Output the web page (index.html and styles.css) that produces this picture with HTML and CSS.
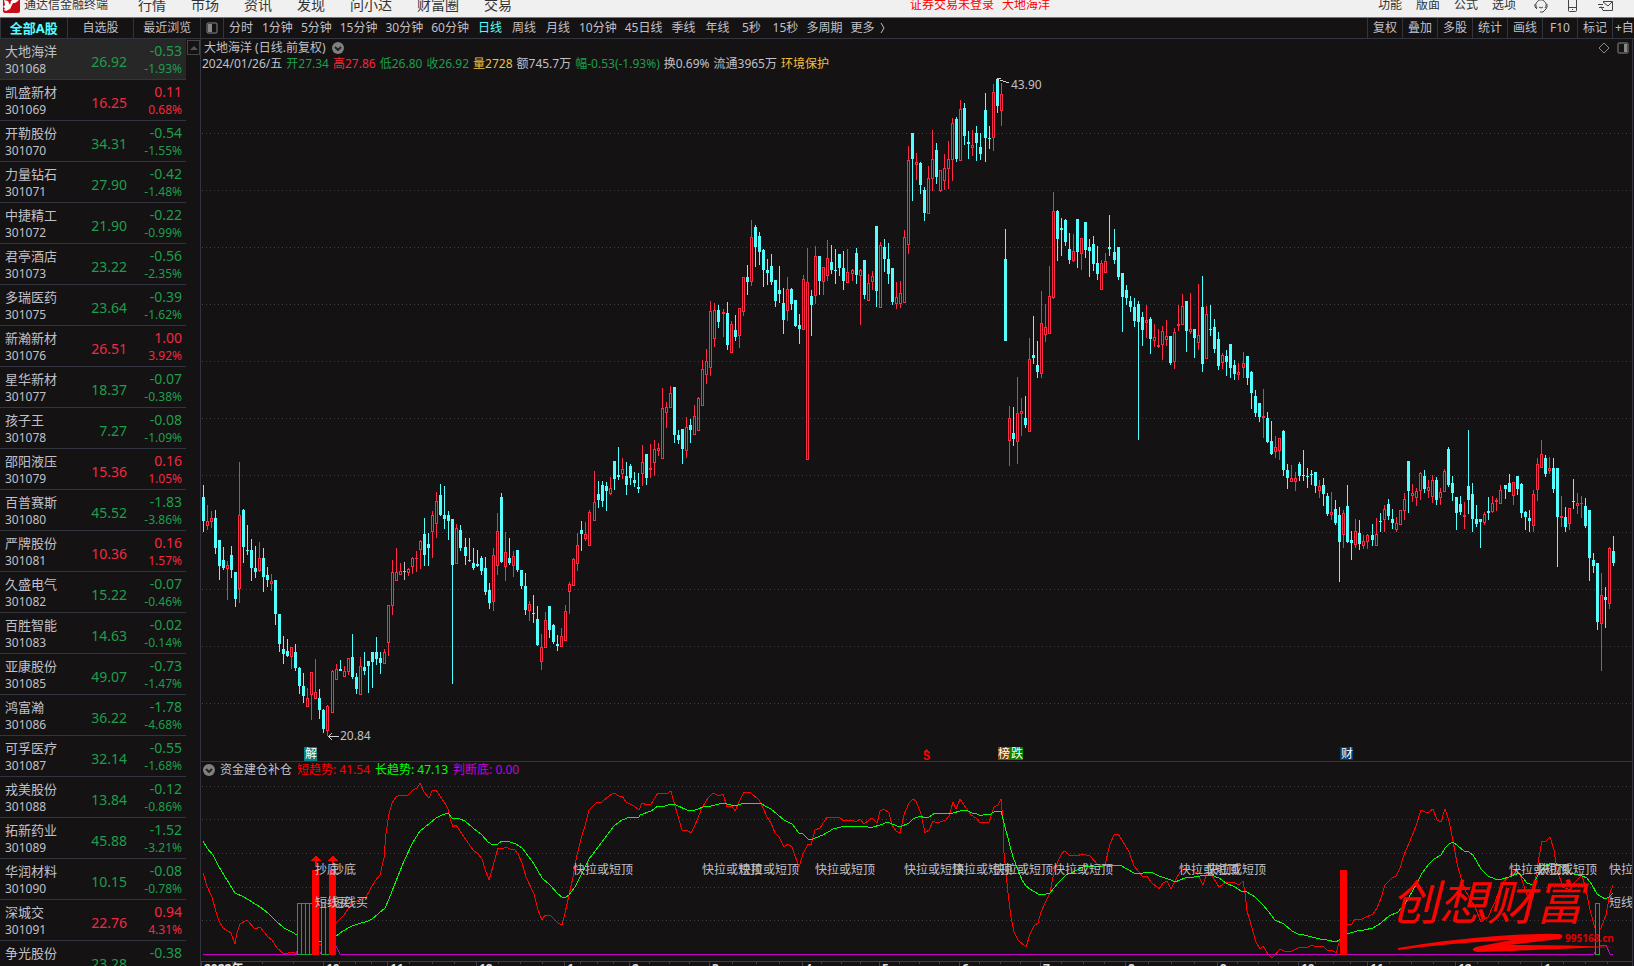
FILE: index.html
```html
<!DOCTYPE html>
<html lang="zh-CN">
  <head>
    <meta charset="UTF-8" />
    <meta name="viewport" content="width=device-width, initial-scale=1.0" />
    <title>通达信金融终端</title>
    <link rel="stylesheet" href="styles.css">
  </head>
  <body>
    <header class="titlebar">
      <svg class="logo" width="17" height="17" viewBox="0 0 17 17">
        <rect width="17" height="17" rx="2" fill="#c40d14" />
        <path d="M1 4l4 1 2 4 1-4 4-3 5-1-2 4-3 2h-2l-3 6-4 2-2-1 1-2-2-1 2-2z" fill="#fff" />
      </svg>
      <span class="app-name">通达信金融终端</span>
      <nav class="menu">
        <a href="#">行情</a>
        <a href="#">市场</a>
        <a href="#">资讯</a>
        <a href="#">发现</a>
        <a href="#">问小达</a>
        <a href="#">财富圈</a>
        <a href="#">交易</a>
      </nav>
      <div class="login-status"><span>证券交易未登录</span><span>大地海洋</span></div>
      <nav class="tools">
        <a href="#">功能</a>
        <a href="#">版面</a>
        <a href="#">公式</a>
        <a href="#">选项</a>
      </nav>
      <div class="title-icons">
        <svg width="14" height="14" viewBox="0 0 14 14" fill="none" stroke="#444">
          <path d="M3 9a5 5 0 1 1 8 0M1 5v3l2 2M13 5v3l-1 2-3 3H6" />
          <path d="M5 8q2 2 4 0" />
        </svg>
        <svg width="14" height="14" viewBox="0 0 14 14" fill="none" stroke="#444">
          <rect x="2.500" y="-3.500" width="8" height="16" rx="1" />
          <path d="M2 8.500h9M6 10.500h1" />
        </svg>
        <svg width="16" height="14" viewBox="0 0 16 14" fill="none" stroke="#444">
          <path d="M3 7.500l2 4h9.500v-9H5M5 3l5 4 4-4M0 5.500h5M1 8.500h5" />
        </svg>
      </div>
    </header>

    <div class="toolbar">
      <div class="list-tabs">
        <button class="active">全部A股</button>
        <button>自选股</button>
        <button>最近浏览</button>
      </div>
      <button class="split" aria-label="侧栏">
        <svg width="12" height="12" viewBox="0 0 12 12">
          <rect x="1" y="1" width="10" height="10" rx="1" fill="none" stroke="#888" />
          <rect x="2" y="2" width="4" height="8" fill="#888" />
        </svg>
      </button>
      <div class="periods">
        <button>分时</button>
        <button>1分钟</button>
        <button>5分钟</button>
        <button>15分钟</button>
        <button>30分钟</button>
        <button>60分钟</button>
        <button class="active">日线</button>
        <button>周线</button>
        <button>月线</button>
        <button>10分钟</button>
        <button>45日线</button>
        <button>季线</button>
        <button>年线</button>
        <button>5秒</button>
        <button>15秒</button>
        <button>多周期</button>
        <button class="more">更多
          <svg width="5" height="10" viewBox="0 0 5 10" fill="none" stroke="#c0c0c8"><path d="M1 0l3 5-3 5" /></svg>
        </button>
      </div>
      <div class="actions">
        <button>复权</button>
        <button>叠加</button>
        <button>多股</button>
        <button>统计</button>
        <button>画线</button>
        <button>F10</button>
        <button>标记</button>
        <button class="cut">+自选</button>
      </div>
    </div>

    <main>
      <aside>
        <table class="stocks">
          <tbody id="stocks"></tbody>
        </table>
        <div class="scroll">
          <button aria-label="向上">
            <svg width="8" height="4" viewBox="0 0 8 4"><path d="M0 4l4-4 4 4z" fill="#555" /></svg>
          </button>
        </div>
      </aside>

      <div class="charts">
        <section class="price">
          <svg class="plot" shape-rendering="crispEdges">
            <g id="price-grid" class="grid"></g>
            <path id="up" class="up" fill-rule="evenodd" />
            <path id="down" class="down" />
            <path id="flat" class="flat" />
            <path class="pointer" d="M796 38.500h4M797.500 38v5M799 40.500h3M802 41.500h3M805 42.500h3M127 696.500h11M128 696l3-3M128 697l3 3" />
            <text x="810" y="49">43.90</text>
            <text x="139" y="700">20.84</text>
            <g class="marks">
              <rect x="103" y="707" width="13" height="14" fill="#008080" />
              <text x="104" y="718">解</text>
              <rect x="797" y="707" width="12" height="13" fill="#804000" />
              <text x="797" y="718">榜</text>
              <rect x="809" y="707" width="13" height="13" fill="#008000" />
              <text x="810" y="718">跌</text>
              <rect x="1139" y="707" width="13" height="13" fill="#003a70" />
              <text x="1140" y="718">财</text>
            </g>
            <path d="M722 712l3-3 3 3z" fill="#f00" />
            <text class="dollar" x="722" y="720">S</text>
          </svg>
          <div class="caption">
            <h1>大地海洋 (日线.前复权)</h1>
            <button class="fold" aria-label="展开"><svg width="8" height="5" viewBox="0 0 8 5" fill="none" stroke="#222" stroke-width="2"><path d="M1 1l3 3 3-3" /></svg></button>
          </div>
          <div class="quote">
            <span>2024/01/26/五</span>
            <span class="g">开27.34</span>
            <span class="r">高27.86</span>
            <span class="g">低26.80</span>
            <span class="g">收26.92</span>
            <span class="y">量2728</span>
            <span>额745.7万</span>
            <span class="g">幅-0.53(-1.93%)</span>
            <span>换0.69%</span>
            <span>流通3965万</span>
            <span class="y">环境保护</span>
          </div>
          <div class="corner">
            <svg width="12" height="12" viewBox="0 0 12 12"><path d="M6 1l5 5-5 5-5-5z" fill="none" stroke="#888" /></svg>
            <svg width="12" height="12" viewBox="0 0 12 12">
              <rect x="1" y="1" width="10" height="10" rx="1" fill="none" stroke="#888" />
              <rect x="7" y="2" width="3" height="8" fill="#888" />
            </svg>
          </div>
        </section>

        <section class="indicator">
          <svg class="plot">
            <g id="trend-grid" class="grid" shape-rendering="crispEdges"></g>
            <g id="trends" shape-rendering="crispEdges" fill="none">
              <path id="short" stroke="#ff0000" />
              <path id="long" stroke="#00ff00" />
              <path stroke="#c800c8" d="M2 192.500H95l1-3M119 192l2-4M135 184l4 8H1393l6-9h6l4 9h3" />
            </g>
            <g class="signals" shape-rendering="crispEdges">
              <path class="box" d="M96.500 141.500h15v51h-15zM100.500 141v51M104.500 141v51M108.500 141v51M120.500 141.500h8v51h-8zM124.500 141v51M1394.500 141.500h4v51h-4z" />
              <path class="bar" d="M111 108h7v85h-7zM128 108h7v85h-7zM1139 108h7v85h-7z" />
              <path class="bar" d="M110 99l5-6 5 6h-4v5h-2v-5zM127 99l5-6 5 6h-4v5h-2v-5z" />
            </g>
            <g id="tags"></g>
            <g class="watermark">
              <text class="brand" x="1190" y="158">创想财富</text>
              <path d="M1197 186Q1242 178 1296 174Q1340 171 1359 172Q1364 174 1359 177L1309 183Q1360 183 1414 185Q1350 187 1312 189L1276 190Q1268 188 1275 185L1310 178Q1250 181 1197 188z" />
              <text class="site" x="1364" y="180">995168.cn</text>
            </g>
            <g id="axis" shape-rendering="crispEdges"></g>
          </svg>
          <div class="caption">
            <button class="fold" aria-label="展开"><svg width="8" height="5" viewBox="0 0 8 5" fill="none" stroke="#222" stroke-width="2"><path d="M1 1l3 3 3-3" /></svg></button>
            <h2>资金建仓补仓</h2>
            <span class="short">短趋势: 41.54</span>
            <span class="long">长趋势: 47.13</span>
            <span class="base">判断底: 0.00</span>
          </div>
        </section>
      </div>
    </main>

    <script src="chart.js"></script>
  </body>
</html>
```
FILE: styles.css
```css
* {
  box-sizing: border-box;
}

body {
  margin: 0;
  height: 100vh;
  display: flex;
  flex-direction: column;
  overflow: hidden;
  background: #141213;
  color: #c0c0c8;
  font-family: "Noto Sans", "Noto Sans CJK SC", sans-serif;
  font-size: 12px;
  line-height: 16px;
}

button {
  margin: 0;
  padding: 0;
  border: 0;
  background: none;
  color: inherit;
  font: inherit;
  white-space: nowrap;
}

a {
  color: inherit;
  text-decoration: none;
}

h1,
h2 {
  margin: 0;
  font-size: 12px;
  font-weight: normal;
}

/* title bar */
.titlebar {
  display: flex;
  align-items: flex-end;
  height: 18px;
  flex: none;
  padding: 0 20px 4px 3px;
  overflow: hidden;
  background: #f0f0f0;
  border-bottom: 1px solid #777;
  color: #333;
}

.logo {
  flex: none;
}

.app-name {
  width: 115px;
  padding-left: 4px;
}

.menu {
  display: flex;
  gap: 25px;
  padding-left: 3px;
  font-size: 14px;
}

.login-status {
  display: flex;
  gap: 8px;
  margin-left: auto;
  color: #ff0000;
}

.tools {
  display: flex;
  gap: 14px;
  margin-left: 328px;
}

.title-icons {
  display: flex;
  gap: 18px;
  margin-left: 18px;
}

/* toolbar */
.toolbar {
  display: flex;
  height: 21px;
  flex: none;
  border-bottom: 1px solid #32343e;
}

.list-tabs {
  display: flex;
  width: 201px;
  border-right: 1px solid #32343e;
}

.list-tabs button {
  flex: 1;
  border-left: 1px solid #32343e;
}

.list-tabs .active {
  font-size: 13px;
  font-weight: bold;
}

.active {
  color: #54ffff;
}

.split {
  display: flex;
  align-items: center;
  justify-content: center;
  width: 23px;
  border-right: 1px solid #32343e;
}

.periods {
  display: flex;
}

.periods button {
  min-width: 34px;
  padding: 0 4px;
}

.periods .more svg {
  margin-left: 2px;
  vertical-align: -1px;
}

.actions {
  display: flex;
  margin-left: auto;
}

.actions button {
  width: 35px;
  border-left: 1px solid #32343e;
}

.actions .cut {
  width: 22px;
  padding-left: 2px;
  overflow: hidden;
  text-align: left;
}

/* stock list */
main {
  display: flex;
  flex: 1;
  min-height: 0;
}

aside {
  display: flex;
  width: 201px;
  flex: none;
  overflow: hidden;
  border-right: 1px solid #32343e;
}

.stocks {
  width: 186px;
  height: max-content;
  border-collapse: separate;
  border-spacing: 0;
  table-layout: fixed;
}

.stocks td {
  height: 41px;
  padding: 3px 4px 0 0;
  border-bottom: 1px solid #32343e;
  text-align: right;
  vertical-align: top;
}

.stocks td:first-child {
  width: 80px;
  padding-left: 5px;
  text-align: left;
}

.stocks td:nth-child(2) {
  width: 51px;
  padding-top: 15px;
  font-size: 14px;
}

.stocks tr:first-child td {
  background: #272727;
}

.stocks span {
  display: block;
  height: 18px;
  line-height: 18px;
}

.stocks .name {
  font-size: 13px;
}

.stocks .change {
  font-size: 14px;
}

.g {
  color: #1e9e4c;
}

.r {
  color: #f5283f;
}

.y {
  color: #f0c040;
}

.scroll button {
  display: flex;
  align-items: center;
  justify-content: center;
  width: 13px;
  height: 15px;
  margin: 1px 0 0 1px;
  border: 1px solid #454545;
}

/* charts */
.charts {
  display: flex;
  flex: 1;
  flex-direction: column;
  min-width: 0;
  margin-right: 1px;
  padding-top: 1px;
  border-right: 1px solid #32343e;
}

.price,
.indicator {
  position: relative;
  overflow: hidden;
}

.price {
  flex: 1;
}

.indicator {
  height: 205px;
  flex: none;
  border-top: 1px solid #32343e;
}

.plot {
  position: absolute;
  top: 0;
  left: 0;
  width: 100%;
  height: 100%;
}

.plot text {
  fill: #c0c0c8;
}

.grid line {
  stroke: #3e3e46;
  stroke-dasharray: 1 3;
}

.up {
  fill: #ff2a45;
}

.down {
  fill: #54ffff;
}

.flat {
  fill: #c0c0c8;
}

.pointer {
  fill: none;
  stroke: #d0d0d0;
}

.plot .marks text {
  fill: #fff;
}

.plot .dollar {
  fill: #ff0000;
  font-family: "Liberation Mono", monospace;
  font-weight: bold;
}

.caption,
.quote {
  position: relative;
  display: flex;
  align-items: center;
}

.caption {
  gap: 6px;
  padding-left: 3px;
}

.quote {
  gap: 4px;
  padding-left: 1px;
}

.indicator .caption {
  gap: 5px;
  padding-left: 2px;
}

.fold {
  display: flex;
  align-items: center;
  justify-content: center;
  width: 12px;
  height: 12px;
  border-radius: 50%;
  background: #808080;
}

.corner {
  position: absolute;
  top: 2px;
  right: 3px;
  display: flex;
  gap: 7px;
}

.short {
  color: #ff0000;
}

.long {
  color: #00ff00;
}

.base {
  color: #c800dc;
}

.signals .box {
  fill: #141213;
  stroke: #18a838;
}

.signals .bar {
  fill: #ff0000;
}

.watermark path {
  fill: #fa0400;
}

.plot .brand {
  fill: #fa0400;
  font-size: 48px;
  font-style: italic;
}

.plot .site {
  fill: #e00000;
  font-size: 10px;
  font-weight: bold;
}

#axis path {
  fill: none;
  stroke: #3c3e48;
}

#axis text {
  fill: #e0e0e0;
  font-weight: bold;
}
```
FILE: chart.js
```js
const stocks = [
  ["大地海洋", "301068", "26.92", "-0.53", "-1.93%"],
  ["凯盛新材", "301069", "16.25", "0.11", "0.68%"],
  ["开勒股份", "301070", "34.31", "-0.54", "-1.55%"],
  ["力量钻石", "301071", "27.90", "-0.42", "-1.48%"],
  ["中捷精工", "301072", "21.90", "-0.22", "-0.99%"],
  ["君亭酒店", "301073", "23.22", "-0.56", "-2.35%"],
  ["多瑞医药", "301075", "23.64", "-0.39", "-1.62%"],
  ["新瀚新材", "301076", "26.51", "1.00", "3.92%"],
  ["星华新材", "301077", "18.37", "-0.07", "-0.38%"],
  ["孩子王", "301078", "7.27", "-0.08", "-1.09%"],
  ["邵阳液压", "301079", "15.36", "0.16", "1.05%"],
  ["百普赛斯", "301080", "45.52", "-1.83", "-3.86%"],
  ["严牌股份", "301081", "10.36", "0.16", "1.57%"],
  ["久盛电气", "301082", "15.22", "-0.07", "-0.46%"],
  ["百胜智能", "301083", "14.63", "-0.02", "-0.14%"],
  ["亚康股份", "301085", "49.07", "-0.73", "-1.47%"],
  ["鸿富瀚", "301086", "36.22", "-1.78", "-4.68%"],
  ["可孚医疗", "301087", "32.14", "-0.55", "-1.68%"],
  ["戎美股份", "301088", "13.84", "-0.12", "-0.86%"],
  ["拓新药业", "301089", "45.88", "-1.52", "-3.21%"],
  ["华润材料", "301090", "10.15", "-0.08", "-0.78%"],
  ["深城交", "301091", "22.76", "0.94", "4.31%"],
  ["争光股份", "301092", "23.28", "-0.38", "-1.61%"],
];

document.getElementById("stocks").innerHTML = stocks
  .map(([name, code, price, change, pct]) => {
    const tone = change.startsWith("-") ? "g" : "r";
    return `<tr>
      <td><span class="name">${name}</span><span>${code}</span></td>
      <td class="${tone}">${price}</td>
      <td class="${tone}"><span class="change">${change}</span><span>${pct}</span></td>
    </tr>`;
  })
  .join("");

// one candle: type (r up, c down, w flat), high, body top, body bottom, low
const candles = `
c445,457,481,492 r465,481,486,490 r471,478,482,488 c470,478,508,514 c500,500,526,540 c507,520,528,530
r521,525,529,560 c506,515,530,538 c532,532,559,567 r422,475,549,563 c469,470,507,523 c485,510,511,515
c499,510,528,541 c506,528,532,538 r502,518,531,532 c508,518,537,552 c527,535,540,547 r534,541,544,551
c540,540,574,585 c574,574,604,612 c596,609,614,624 c599,611,616,617 r607,607,617,629 c604,612,628,631
c627,628,646,654 c633,646,656,663 r648,658,667,667 r632,632,655,680 r619,652,659,659 c649,658,670,679
c669,670,689,693 r665,666,691,696 r630,631,673,673 r624,629,640,640 c620,629,631,631 r626,631,637,637
r618,618,632,635 c594,617,637,639 c633,637,649,654 r617,626,655,655 c612,627,631,635 c621,621,626,653
c612,612,622,648 c597,612,619,625 c612,618,623,634 r609,612,624,624 r565,565,603,616 r520,532,566,575
r508,532,541,541 r523,531,535,535 w522,531,532,540 r528,529,533,536 r517,518,527,534 r511,518,519,532
r500,501,510,529 c478,494,515,526 c493,504,508,526 r471,475,492,518 r452,461,484,498 c444,455,475,476
c446,475,479,489 c471,475,481,500 c479,479,525,644 r484,488,524,524 c485,490,508,511 c498,507,516,525
w498,520,521,522 c508,523,528,530 c510,524,526,527 c516,518,531,535 c517,528,552,555 c543,550,563,569
r508,515,562,571 r473,491,526,535 c453,457,522,523 r492,512,527,541 c498,518,523,525 r511,516,526,537
c510,510,530,532 c530,530,546,549 c533,546,570,575 r561,564,571,581 c555,573,574,583 c566,579,605,606
r594,607,622,630 r572,580,608,608 c566,566,590,598 c584,585,602,604 c595,604,606,611 r588,596,607,607
r565,571,601,601 r542,544,552,574 r518,519,546,546 r493,505,524,531 c481,490,494,511 r482,494,499,501
r470,472,506,506 r431,462,481,481 c441,454,460,468 c441,445,461,467 c442,446,451,471 r437,448,454,455
c421,421,439,450 c407,435,437,440 r418,429,434,439 c422,436,445,455 c424,426,438,445 c432,440,443,447
c433,447,449,453 r405,422,434,446 c414,414,438,445 r404,428,430,438 r400,409,423,436 r403,408,411,416
r348,368,419,419 r362,367,373,388 r346,353,368,368 c347,347,395,403 c390,395,400,404 c389,389,409,424
r377,387,411,418 c379,385,390,403 r365,376,395,395 r357,358,391,391 r320,329,366,366 r309,321,335,344
r261,271,328,336 r263,270,299,307 c265,270,282,288 r269,272,274,297 c262,273,305,310 r281,284,313,313
c275,290,297,301 r268,268,296,308 r237,237,272,276 c225,237,242,255 r180,197,242,246 c185,187,207,227
c192,196,212,225 c209,210,230,247 c219,230,233,245 c214,226,242,245 c240,240,261,267 c226,250,254,263
c248,263,280,294 r237,249,271,281 c248,249,264,270 c260,260,286,287 c274,285,289,304 r235,239,290,290
r208,242,420,420 c250,256,265,296 r206,216,256,264 c216,216,241,255 r227,227,242,255 r200,218,236,241
c205,222,230,234 c209,230,231,244 c214,214,228,236 c211,228,241,250 r209,232,243,243 r229,230,234,241
c208,213,235,244 r229,230,236,285 c220,220,255,259 r234,243,261,261 r231,236,242,250 c186,186,251,267
r202,205,268,268 c199,207,219,232 c203,219,234,244 c228,228,262,265 r242,257,264,269 r241,253,264,268
r190,197,263,263 r106,120,205,214 c93,93,119,161 r113,122,125,140 c122,123,145,154 c147,150,173,181
r126,138,174,174 r90,119,139,151 c103,110,137,144 r130,130,151,152 r114,128,141,150 r101,119,129,149
r78,83,120,141 c77,79,119,122 r60,69,121,121 c63,68,96,105 c91,102,104,119 r90,105,108,116
c86,93,103,121 c93,107,114,120 c53,70,98,122 c86,98,99,109 r44,52,98,111 c39,39,66,73
r43,54,71,86 c189,219,301,301 r366,378,401,426 c367,393,399,406 r337,373,402,424 r358,371,374,396
c356,378,385,388 r298,319,392,392 c276,315,318,324 c301,325,332,338 r251,283,334,338 r264,287,295,302
r226,256,294,294 r152,171,258,259 c170,171,199,221 c178,188,190,216 c179,180,202,206 c193,209,220,224
r194,211,221,222 c179,179,212,228 r198,198,214,230 c182,182,210,218 c199,207,211,237 c196,204,224,231
c206,223,234,240 r220,223,250,250 r213,221,233,233 c175,207,209,216 c189,212,220,224 c207,207,237,240
c233,233,257,292 c245,250,258,265 c256,261,267,272 c258,267,281,287 c261,264,282,400 c272,277,290,306
r265,280,283,298 c277,279,299,314 r284,297,301,307 r289,305,307,308 r286,291,305,320 r280,296,300,306
c296,296,323,325 r288,292,322,329 r265,284,286,291 r254,266,285,285 c261,261,291,312 r253,289,292,294
c289,289,298,318 r244,295,303,310 c236,267,324,332 r266,274,319,319 c265,289,290,296 c279,287,309,313
c292,299,326,330 r313,315,323,329 c310,316,322,336 c304,304,328,338 c320,325,334,340 r323,332,335,340
r312,323,328,338 c316,316,338,345 c331,332,353,369 c350,356,373,377 c363,363,377,382 r349,376,378,398
c372,378,402,403 c381,401,414,415 r396,407,412,418 r398,398,411,420 c390,391,430,436 c424,430,438,449
r425,438,442,442 r432,438,442,451 c422,424,436,441 c410,435,436,441 c428,436,437,448 c430,434,435,445
c432,432,446,453 r440,446,451,458 c438,445,454,466 c453,456,474,476 r452,472,475,480 c460,469,483,485
c467,475,502,542 r470,473,495,508 c445,466,502,503 c491,500,503,520 r479,491,505,508 c480,493,504,510
r495,501,506,509 r494,495,502,509 c484,495,500,506 r478,494,506,506 c473,481,482,492 r465,469,480,492
c459,464,476,480 c469,479,483,489 r477,483,490,492 r470,470,485,485 r453,459,471,480 c421,421,451,473
r444,453,456,462 r448,451,458,466 r432,433,451,460 c430,436,449,453 r440,447,451,458 r435,440,457,463
c437,440,460,465 r448,452,458,465 r429,431,452,452 c407,409,445,447 c436,443,453,461 c457,457,473,490
c456,464,472,475 r462,475,477,489 c390,446,460,474 c443,454,479,492 c465,479,484,487 c479,479,482,508
r472,474,483,485 c457,471,473,480 r456,463,472,473 r458,460,462,471 r445,450,464,464 c445,445,449,459
c434,443,452,452 r442,442,456,465 c436,436,449,455 c443,444,473,478 c471,472,477,490 c470,478,481,492
r450,454,486,492 r418,424,450,461 r400,414,428,428 c415,418,434,437 r417,428,431,434 c418,428,449,453
c428,428,477,527 r456,476,478,487 c467,477,487,492 r468,468,484,490 c439,461,462,469 r453,463,466,474
r456,463,464,478 c458,466,486,488 c470,470,518,541 c513,520,526,533 c523,523,582,590 r533,555,584,631
c547,557,560,588 r507,508,564,569 c496,511,523,526`;

const box = (x, y, w, bottom) => `M${x} ${y}h${w}V${bottom}h${-w}z`;
const shapes = { r: "", c: "", w: "" };

candles.trim().split(/\s+/).forEach((candle, i) => {
  const type = candle[0];
  const [high, top, bottom, low] = candle.slice(1).split(",").map(Number);
  const x = 2 + i * 4 + Math.floor((i + 0.4) / 32.26);
  if (type === "r") {
    if (high < top) shapes.r += box(x, high, 1, top);
    if (low > bottom) shapes.r += box(x, bottom, 1, low);
    shapes.r += box(x - 1, top, 3, bottom);
    // hollow body
    if (bottom - top > 2) shapes.r += box(x, top + 1, 1, bottom - 1);
  } else {
    shapes[type] += box(x, high, 1, low) + box(x - 1, top, 3, bottom);
  }
});

document.getElementById("up").setAttribute("d", shapes.r);
document.getElementById("down").setAttribute("d", shapes.c);
document.getElementById("flat").setAttribute("d", shapes.w);

function drawGrid(id, rows) {
  document.getElementById(id).innerHTML = rows
    .map((y) => `<line x1="1" x2="100%" y1="${y}.5" y2="${y}.5" />`)
    .join("");
}

drawGrid("price-grid", [93, 150, 207, 264, 321, 378, 435, 492, 549, 606, 663]);
drawGrid("trend-grid", [24, 57, 91, 125, 158]);

// trend lines, one string per section of the time axis
const sections = [
  { x: -6, scale: 1 / 3 },
  { x: 439, scale: 1 / 3 },
  { x: 899, scale: 0.3406 },
];

const shortTrend = [
  `25,400 37,437 52,470 64,516 73,543 85,565 109,580 121,612 127,580 134,552 155,541 181,566 194,560 218,592
  232,600 245,625 268,641 290,637 315,646 345,630 362,600 376,616 400,590 424,550 437,535 448,525 470,490 512,470
  541,424 556,405 566,355 574,280 583,222 592,188 604,172 615,166 640,166 655,149 667,144 676,130 688,155 701,175
  712,154 723,149 734,168 752,196 760,206 766,235 773,261 784,256 808,291 835,331 848,341 860,358 871,387 883,421
  895,379 908,324 920,326 932,320 944,328 956,326 968,341 980,370 992,411 1016,462 1028,510 1040,541 1050,526
  1064,526 1088,550 1100,555 1111,520 1123,465 1135,410 1147,345 1160,285 1171,257 1183,210 1207,187 1222,187
  1243,167 1258,160 1272,169 1282,169 1292,187 1306,193 1316,197 1331,211`,
  `7,190 20,196 32,193 55,160 79,163 92,154 104,198 127,271 140,271 152,279 164,256 185,205 205,175 220,160
  237,169 250,163 261,202 275,198 286,213 298,186 311,157 334,160 358,179 370,205 382,230 394,250 406,279 418,290
  431,321 443,311 455,320 478,380 490,343 503,311 514,315 526,269 540,263 562,230 600,233 611,244 635,241 648,247
  661,238 673,253 697,233 710,250 721,213 733,208 746,220 757,256 769,274 781,279 793,224 806,188 819,178 829,183
  842,222 854,279 866,271 878,244 892,250 917,241 926,229 938,187 949,206 961,178 972,194 994,225 1009,233
  1021,250 1047,247 1061,202 1075,196 1084,178 1088,240 1093,340 1104,460 1113,532 1121,575 1135,600 1157,622
  1170,582 1182,558 1193,550 1204,515 1216,490 1229,460 1241,395 1253,362 1265,340 1275,334 1288,346 1312,348
  1326,343 1349,349 1373,374`,
  `16,374 28,313 42,284 54,283 65,299 84,336 101,378 125,411 137,408 149,426 172,448 184,430 196,424 208,447
  220,424 236,395 256,380 285,400 301,436 314,400 327,403 348,441 371,425 391,425 409,436 421,424 427,460 433,513
  445,565 457,605 469,628 480,618 492,643 504,655 528,628 540,634 563,634 582,625 610,620 621,616 633,622 656,619
  667,630 680,631 692,640 704,600 725,553 740,553 750,536 770,538 801,522 813,503 825,474 836,435 857,413 870,409
  882,384 894,345 915,289 929,257 942,210 953,217 966,216 977,206 989,240 1000,247 1012,208 1024,244 1037,304
  1048,370 1061,415 1075,455 1088,480 1100,500 1120,545 1140,530 1160,485 1180,430 1200,410 1218,390 1233,403
  1255,465 1270,470 1285,370 1297,304 1310,303 1320,292 1332,330 1343,390 1360,440 1380,450 1395,425 1415,404
  1428,450 1440,510 1455,575 1470,565 1487,525 1497,460 1507,436`,
];

const longTrend = [
  `25,304 37,325 55,345 73,382 97,421 121,460 146,470 170,487 194,502 218,520 242,542 268,565 290,577 306,584
  345,600 372,605 381,604 424,589 445,573 470,557 490,551 518,543 532,537 550,521 570,504 583,478 592,454 608,407
  628,362 655,306 676,274 704,250 724,234 740,225 760,220 772,234 796,236 811,244 835,265 862,286 880,307 895,316
  908,312 920,304 944,307 962,313 980,324 992,340 1016,371 1040,415 1064,434 1088,462 1100,472 1112,471 1123,465
  1140,441 1183,358 1220,305 1257,258 1280,241 1304,230 1331,230`,
  `0,226 32,213 55,199 68,202 90,193 107,195 140,211 164,211 197,199 214,199 250,190 286,199 311,190 361,190
  380,202 394,206 431,240 455,253 478,279 490,283 503,298 514,301 526,294 550,284 580,268 604,260 635,257 670,257
  685,262 700,262 721,256 745,247 757,253 781,262 806,250 820,236 840,229 854,233 866,231 885,220 908,220 926,223
  971,211 984,213 997,219 1012,221 1024,227 1036,223 1048,226 1061,217 1084,212 1096,262 1108,307 1120,352
  1135,391 1147,420 1157,437 1170,448 1193,463 1206,466 1229,460 1253,430 1277,406 1300,395 1336,378 1373,377`,
  `0,380 17,374 58,374 80,388 101,400 125,400 150,397 173,409 208,421 220,427 250,415 275,411 315,406 327,405
  350,415 371,428 395,441 414,452 432,455 456,471 480,495 492,513 515,541 540,553 563,572 582,581 600,584 622,591
  645,598 667,600 692,607 725,583 754,572 775,571 801,563 825,550 848,529 876,517 895,492 930,430 945,400 965,372
  980,358 1000,344 1012,323 1024,311 1035,307 1050,319 1070,333 1084,336 1096,346 1118,386 1140,408 1160,416
  1180,418 1200,411 1230,400 1255,430 1270,436 1290,400 1310,375 1330,368 1350,378 1380,400 1415,408 1430,415
  1445,436 1460,463 1484,478 1495,471 1506,460`,
];

function drawTrend(id, series) {
  const points = series.flatMap((part, i) =>
    part.trim().split(/\s+/).map((point) => {
      const [x, y] = point.split(",");
      return `${Math.round(sections[i].x + x * sections[i].scale)} ${Math.round(y / 3 - 22)}`;
    })
  );
  document.getElementById(id).setAttribute("d", "M" + points.join("L"));
}

drawTrend("short", shortTrend);
drawTrend("long", longTrend);

const tags = [
  ["抄底", 112, [114, 131]],
  ["短线买", 145, [114, 131, 1408]],
  ["快拉或短顶", 112, [372, 501, 538, 614, 703, 751, 792, 852, 978, 1005, 1308, 1336, 1408]],
];

document.getElementById("tags").innerHTML = tags
  .map(([label, y, xs]) => xs.map((x) => `<text x="${x}" y="${y}">${label}</text>`).join(""))
  .join("");

// month axis
const months = [
  [0, "2022年"], [122, "10"], [186, "11"], [275, "12"], [363, "1"], [428, "2"], [508, "3"], [601, "4"],
  [678, "5"], [758, "6"], [839, "7"], [924, "8"], [1016, "9"], [1097, "10"], [1166, "11"], [1254, "12"], [1340, "1"],
];

let ticks = "M0 199.5H1432";
let labels = "";
months.forEach(([x, label], i) => {
  ticks += `M${x}.5 199v6`;
  const next = months[i + 1] ? months[i + 1][0] : 1428;
  for (let n = 1; n < 4; n++) {
    ticks += `M${Math.round(x + ((next - x) * n) / 4)}.5 199v3`;
  }
  labels += `<text x="${x + 3}" y="211">${label}</text>`;
});
document.getElementById("axis").innerHTML = `<path d="${ticks}" />${labels}`;
```
